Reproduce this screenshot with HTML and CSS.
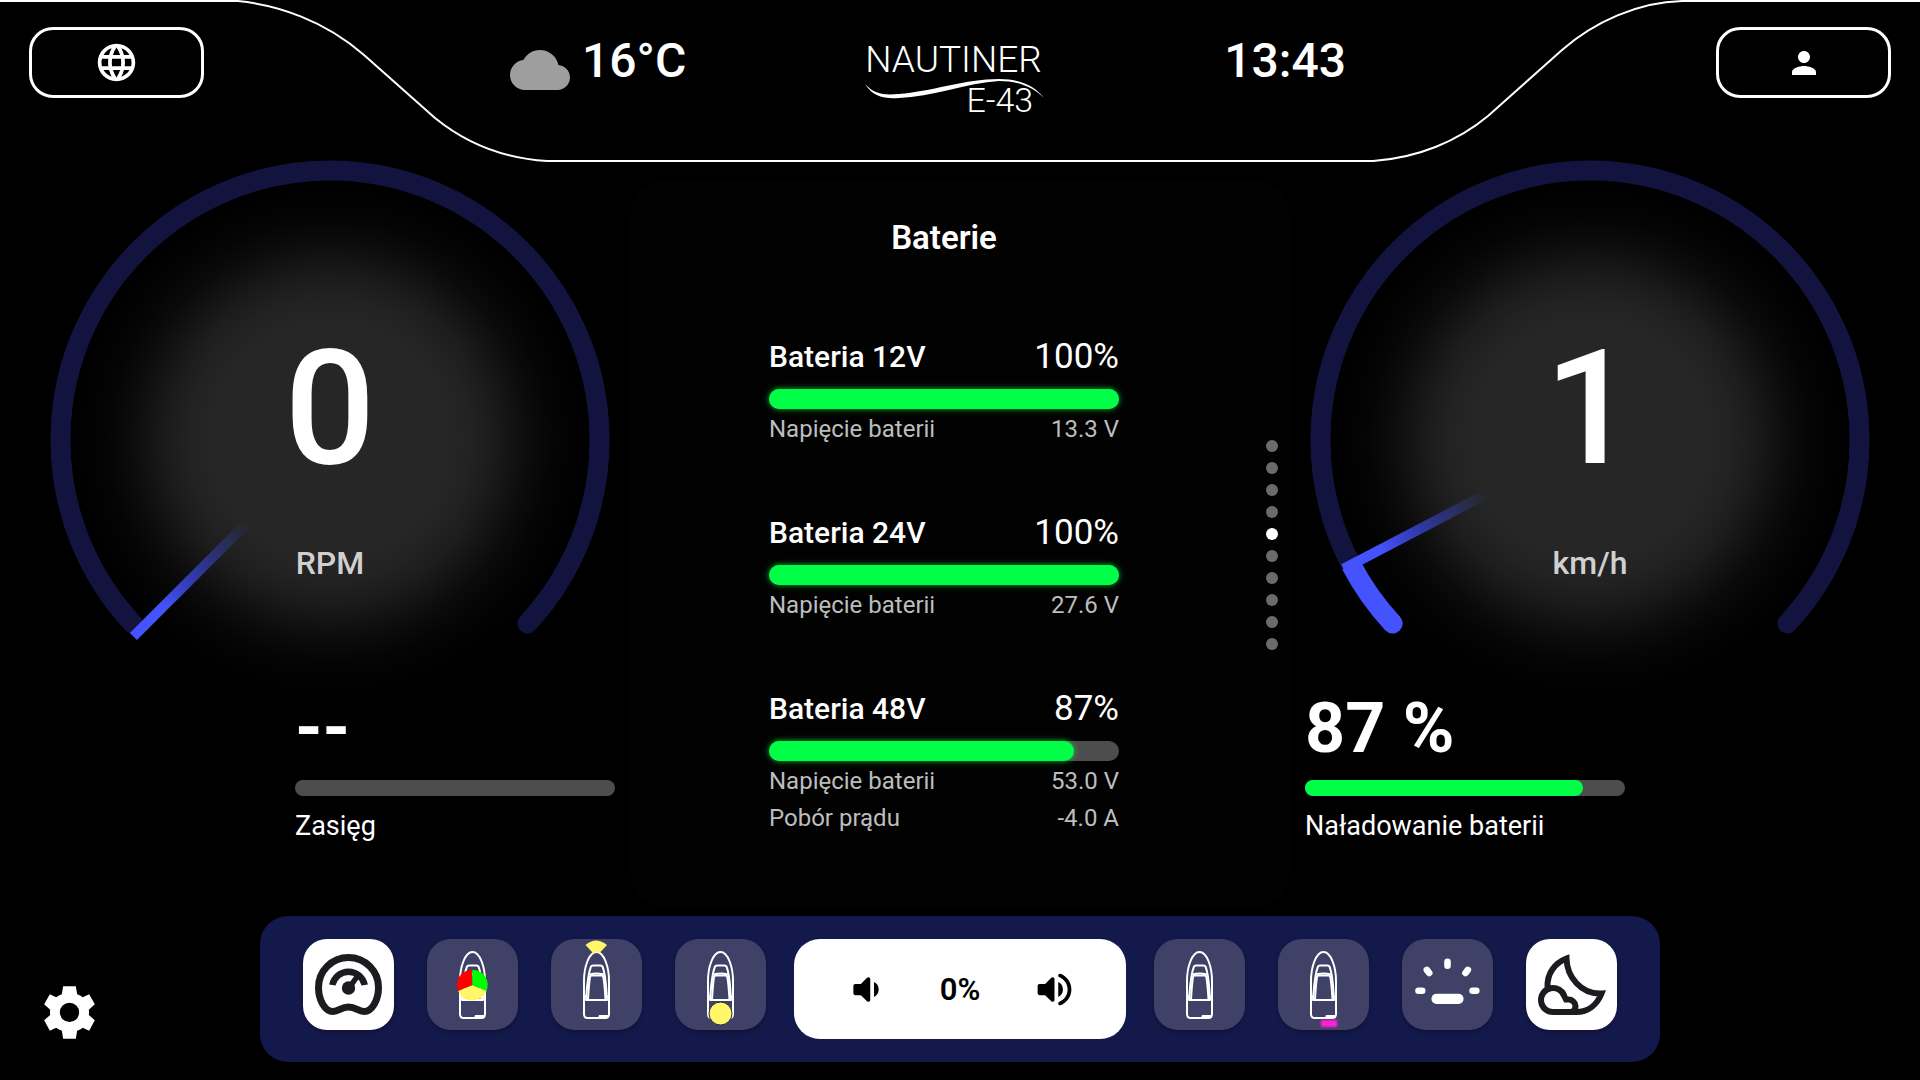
FILE: index.html
```html
<!DOCTYPE html>
<html lang="pl">
<head>
  <meta charset="UTF-8">
  <meta name="viewport" content="width=device-width, initial-scale=1.0">
  <title>Nautiner E-43</title>
  <link rel="stylesheet" href="styles.css">
</head>
<body>
  <!-- shared shapes -->
  <svg class="defs" aria-hidden="true">
    <symbol id="boat" viewBox="0 0 91 91">
      <g fill="none" stroke="#fff" stroke-width="2" stroke-linejoin="round">
        <path d="M45.500 13C38 13 33 28 33 42V75Q33 79 36.500 79H54.500Q58 79 58 75V42C58 28 53 13 45.500 13Z"/>
        <path d="M35 61C36 48 36.500 36 40 27.500Q40.500 26.500 42 26.500H49.500Q51 26.500 51.500 27.500C55 36 55 48 56 61Z"/>
        <path d="M37 60.500C37.500 52 38 44 39 38Q39.300 36.500 41 36.500H50.500Q52 36.500 52.300 38C53.500 44 54 52 54.500 60.500"/>
        <path d="M38.500 35.500Q45.500 33.500 53 35.500M33 57.500H36M58 57.500H55"/>
      </g>
      <path d="M48 76H57V79H47Z" fill="#fff"/>
    </symbol>
    <radialGradient id="glow" gradientUnits="userSpaceOnUse" cx="280" cy="280" r="260">
      <stop offset="0.45" stop-color="#262626"/>
      <stop offset="0.54" stop-color="#222"/>
      <stop offset="0.62" stop-color="#1c1c1c"/>
      <stop offset="0.69" stop-color="#141414"/>
      <stop offset="0.77" stop-color="#0b0b0b"/>
      <stop offset="0.85" stop-color="#050505"/>
      <stop offset="0.92" stop-color="#020202"/>
      <stop offset="1" stop-color="#000"/>
    </radialGradient>
    <linearGradient id="needle" x1="0" x2="1">
      <stop offset="0.25" stop-color="#4553ff"/>
      <stop offset="1" stop-color="#4553ff" stop-opacity="0"/>
    </linearGradient>
  </svg>

  <header class="topbar">
    <svg class="topbar-line" viewBox="0 0 1920 162" preserveAspectRatio="none" aria-hidden="true">
      <path d="M0 1H238C277 5 324 20 364 55L435 118C462 140 497 158 547 161H1373C1418 158 1458 141 1488 116L1562 50C1594 22 1638 2 1682 1H1920"/>
    </svg>

    <button class="outline-btn" aria-label="Język">
      <svg width="45" height="45" viewBox="0 0 24 24" fill="#fff"><path d="M11.990 2C6.470 2 2 6.480 2 12s4.470 10 9.990 10C17.520 22 22 17.520 22 12S17.520 2 11.990 2zm6.930 6h-2.950c-.320-1.250-.780-2.450-1.380-3.560 1.840.630 3.370 1.910 4.330 3.560zM12 4.040c.830 1.200 1.480 2.530 1.910 3.960h-3.820c.430-1.430 1.080-2.760 1.910-3.960zM4.260 14C4.100 13.360 4 12.690 4 12s.100-1.360.260-2h3.380c-.080.660-.140 1.320-.140 2s.060 1.340.140 2H4.260zm.820 2h2.950c.320 1.250.780 2.450 1.380 3.560-1.840-.630-3.370-1.900-4.330-3.560zm2.950-8H5.080c.960-1.660 2.490-2.930 4.330-3.560C8.810 5.550 8.350 6.750 8.030 8zM12 19.960c-.830-1.200-1.480-2.530-1.910-3.960h3.820c-.430 1.430-1.080 2.760-1.910 3.960zM14.340 14H9.660c-.090-.660-.160-1.320-.160-2s.070-1.350.160-2h4.680c.090.650.160 1.320.160 2s-.070 1.340-.160 2zm.250 5.560c.600-1.110 1.060-2.310 1.380-3.560h2.950c-.960 1.650-2.490 2.930-4.330 3.560zM16.360 14c.080-.660.140-1.320.140-2s-.060-1.340-.140-2h3.380c.160.640.260 1.310.260 2s-.100 1.360-.260 2h-3.380z"/></svg>
    </button>

    <div class="topbar-info">
      <div class="weather">
        <svg width="60" height="60" viewBox="0 0 24 24" fill="#9e9e9e"><path d="M19.350 10.040A7.490 7.490 0 0 0 12 4C9.110 4 6.600 5.640 5.350 8.040A5.994 5.994 0 0 0 0 14c0 3.310 2.690 6 6 6h13c2.760 0 5-2.240 5-5 0-2.640-2.050-4.780-4.650-4.960z"/></svg>
        <span class="top-value">16°C</span>
      </div>
      <div class="logo">
        <span class="logo-name">NAUTINER</span>
        <svg class="logo-wave" viewBox="0 0 180 20" fill="#fff"><path d="M0 4C10 15 20 15 34 14C64 12 100 -1 134 -1C156 -1 170 6 179 18C168 7 154 1 134 1C102 3 66 17 34 18C20 19 8 17 0 4Z"/></svg>
        <span class="logo-model">E-43</span>
      </div>
      <time class="top-value">13:43</time>
    </div>

    <button class="outline-btn" aria-label="Profil">
      <svg width="36" height="36" viewBox="0 0 24 24" fill="#fff"><path d="M12 12c2.210 0 4-1.790 4-4s-1.790-4-4-4-4 1.790-4 4 1.790 4 4 4zm0 2c-2.670 0-8 1.340-8 4v2h16v-2c0-2.660-5.330-4-8-4z"/></svg>
    </button>
  </header>

  <main class="dashboard">
    <section class="side side-left">
      <svg class="gauge" viewBox="0 0 560 528">
        <circle cx="280" cy="280" r="260" fill="url(#glow)"/>
        <path class="gauge-track" d="M82.600 463.500A269.500 269.500 0 1 1 477.400 463.500"/>
        <g transform="rotate(-45 280 280)">
          <rect x="2" y="275" width="162" height="10" fill="url(#needle)"/>
        </g>
        <text class="gauge-value" x="280" y="303">0</text>
        <text class="gauge-unit" x="280" y="414">RPM</text>
      </svg>
      <div class="stat">
        <div class="stat-value">--</div>
        <div class="bar bar-thin" role="progressbar" aria-label="Zasięg"></div>
        <div class="stat-label">Zasięg</div>
      </div>
    </section>

    <section class="panel">
      <div class="panel-content">
        <h1 class="panel-title">Baterie</h1>
        <div class="batteries">
          <div class="battery">
            <div class="battery-head">
              <h2>Bateria 12V</h2>
              <span class="battery-level">100%</span>
            </div>
            <div class="bar" role="progressbar" aria-label="Bateria 12V" aria-valuenow="100">
              <div class="bar-fill glow" style="width: 100%"></div>
            </div>
            <div class="battery-row"><span>Napięcie baterii</span><span>13.3 V</span></div>
          </div>
          <div class="battery">
            <div class="battery-head">
              <h2>Bateria 24V</h2>
              <span class="battery-level">100%</span>
            </div>
            <div class="bar" role="progressbar" aria-label="Bateria 24V" aria-valuenow="100">
              <div class="bar-fill glow" style="width: 100%"></div>
            </div>
            <div class="battery-row"><span>Napięcie baterii</span><span>27.6 V</span></div>
          </div>
          <div class="battery">
            <div class="battery-head">
              <h2>Bateria 48V</h2>
              <span class="battery-level">87%</span>
            </div>
            <div class="bar" role="progressbar" aria-label="Bateria 48V" aria-valuenow="87">
              <div class="bar-fill glow" style="width: 87%"></div>
            </div>
            <div class="battery-row"><span>Napięcie baterii</span><span>53.0 V</span></div>
            <div class="battery-row"><span>Pobór prądu</span><span>-4.0 A</span></div>
          </div>
        </div>
      </div>
      <nav class="dots">
        <button class="dot" aria-label="1"></button>
        <button class="dot" aria-label="2"></button>
        <button class="dot" aria-label="3"></button>
        <button class="dot" aria-label="4"></button>
        <button class="dot active" aria-label="5"></button>
        <button class="dot" aria-label="6"></button>
        <button class="dot" aria-label="7"></button>
        <button class="dot" aria-label="8"></button>
        <button class="dot" aria-label="9"></button>
        <button class="dot" aria-label="10"></button>
      </nav>
    </section>

    <section class="side side-right">
      <svg class="gauge" viewBox="0 0 560 528">
        <circle cx="280" cy="280" r="260" fill="url(#glow)"/>
        <path class="gauge-track" d="M82.600 463.500A269.500 269.500 0 1 1 477.400 463.500"/>
        <circle class="gauge-cap" cx="82.600" cy="463.500" r="10"/>
        <path class="gauge-progress" d="M82.600 463.500A269.500 269.500 0 0 1 41.200 404.900"/>
        <g transform="rotate(-27.600 280 280)">
          <rect x="2" y="275" width="162" height="10" fill="url(#needle)"/>
        </g>
        <text class="gauge-value" x="280" y="303">1</text>
        <text class="gauge-unit" x="280" y="414">km/h</text>
      </svg>
      <div class="stat">
        <div class="stat-value">87 %</div>
        <div class="bar bar-thin" role="progressbar" aria-label="Naładowanie baterii" aria-valuenow="87">
          <div class="bar-fill" style="width: 87%"></div>
        </div>
        <div class="stat-label">Naładowanie baterii</div>
      </div>
    </section>
  </main>

  <footer class="bottom">
    <button class="settings-btn" aria-label="Ustawienia">
      <svg width="51" height="53" viewBox="72 78 152 159" fill="#fff" fill-rule="evenodd"><path d="M129 79H167L171 103Q180 106 188 112L207 103L224 133L206 149Q207 157 206 165L224 181L207 212L188 203Q180 209 171 212L167 236H129L125 212Q116 209 108 203L89 212L72 181L90 165Q89 157 90 149L72 133L89 103L108 112Q116 106 125 103ZM148 128A29 29 0 1 0 148 186A29 29 0 1 0 148 128Z"/></svg>
    </button>

    <div class="dock">
      <div class="dock-group">
        <button class="tile light" aria-label="Pulpit">
          <svg viewBox="0 0 91 91" fill="none" stroke="#1c1b20">
            <path stroke-width="7" d="M45.500 68C38 68 36 72.500 30 72.500C22 72.500 15.500 61 15.500 48.500A30 30 0 0 1 75.500 48.500C75.500 61 69 72.500 61 72.500C55 72.500 53 68 45.500 68Z"/>
            <path stroke-width="6.500" d="M29.300 46A16.500 16.500 0 0 1 61.700 46"/>
            <path stroke-width="5.500" d="M46 49L56 35"/>
            <circle cx="45.500" cy="49" r="6.700" fill="#1c1b20" stroke="none"/>
          </svg>
        </button>
        <button class="tile" aria-label="Światła nawigacyjne">
          <svg viewBox="0 0 91 91">
            <use href="#boat"/>
            <path fill="#fff66a" d="M45.300 46L31.100 52A15.300 15.300 0 0 0 59.500 52Z"/>
            <path fill="#f00" d="M45.300 46V30.700A15.300 15.300 0 0 0 31.100 52Z"/>
            <path fill="#0f0" d="M45.300 46V30.700A15.300 15.300 0 0 1 59.500 52Z"/>
          </svg>
        </button>
        <button class="tile" aria-label="Światło dziobowe">
          <svg viewBox="0 0 91 91">
            <use href="#boat"/>
            <path fill="#fff66a" d="M42 14L34.500 6Q45 -3 56 6L48.500 14Q45.200 12.500 42 14Z"/>
          </svg>
        </button>
        <button class="tile" aria-label="Światło rufowe">
          <svg viewBox="0 0 91 91">
            <use href="#boat"/>
            <circle cx="45.500" cy="74.500" r="11.500" fill="#fff66a" stroke="#26263a"/>
          </svg>
        </button>
      </div>

      <div class="volume">
        <button class="volume-btn" aria-label="Ciszej">
          <svg width="45" height="45" viewBox="0 0 24 24"><path d="M5 10v4c0 .550.450 1 1 1h3l3.290 3.290c.630.630 1.710.180 1.710-.710V6.410c0-.890-1.080-1.340-1.710-.710L9 9H6c-.550 0-1 .450-1 1zm13.500 2A4.500 4.500 0 0 0 16 7.970v8.050c1.480-.730 2.500-2.250 2.500-4.020z"/></svg>
        </button>
        <span class="volume-value">0%</span>
        <button class="volume-btn" aria-label="Głośniej">
          <svg width="45" height="45" viewBox="0 0 24 24"><path d="M3 10v4c0 .550.450 1 1 1h3l3.290 3.290c.630.630 1.710.180 1.710-.710V6.410c0-.890-1.080-1.340-1.710-.710L7 9H4c-.550 0-1 .450-1 1zm13.500 2A4.500 4.500 0 0 0 14 7.970v8.050c1.480-.730 2.500-2.250 2.500-4.020zM14 4.450v.200c0 .380.250.710.600.850C17.180 6.530 19 9.060 19 12s-1.820 5.470-4.400 6.500c-.360.140-.600.470-.600.850v.200c0 .630.630 1.070 1.210.850C18.600 19.110 21 15.840 21 12s-2.400-7.110-5.790-8.400c-.580-.230-1.210.220-1.210.850z"/></svg>
        </button>
      </div>

      <div class="dock-group">
        <button class="tile" aria-label="Łódź">
          <svg viewBox="0 0 91 91"><use href="#boat"/></svg>
        </button>
        <button class="tile" aria-label="Światło podwodne">
          <svg viewBox="0 0 91 91">
            <use href="#boat"/>
            <rect class="underwater" x="43" y="81" width="16" height="7" fill="#ff22d8"/>
          </svg>
        </button>
        <button class="tile" aria-label="Oświetlenie">
          <svg viewBox="0 0 91 91" fill="#fff">
            <rect x="42.200" y="19.500" width="6.600" height="10.500" rx="3.300"/>
            <rect x="22.700" y="27.200" width="6.600" height="10.500" rx="3.300" transform="rotate(-38 26 32.400)"/>
            <rect x="61.400" y="27.200" width="6.600" height="10.500" rx="3.300" transform="rotate(38 64.700 32.400)"/>
            <rect x="13.200" y="48.400" width="10.300" height="6.600" rx="3.300"/>
            <rect x="67.300" y="48.400" width="10.300" height="6.600" rx="3.300"/>
            <rect x="29.400" y="54.700" width="32.200" height="10.200" rx="5.100"/>
          </svg>
        </button>
        <button class="tile light" aria-label="Tryb nocny">
          <svg viewBox="0 0 91 91" fill="none" stroke="#1c1b20" stroke-width="6">
            <path d="M21.500 48C21 34 29 24 40.500 19.500C41 38 55 55.500 75.500 54.500C71 66 62 73 50 73H41"/>
            <path d="M27.500 73A12 12 0 1 1 38.500 57.500L40 60.500H42A7 7 0 0 1 49.500 67Q49.500 71 46 73Z"/>
          </svg>
        </button>
      </div>
    </div>
  </footer>
</body>
</html>
```

FILE: styles.css
```css
* {
  box-sizing: border-box;
}

body {
  margin: 0;
  min-height: 100vh;
  display: flex;
  flex-direction: column;
  background: #000;
  color: #fff;
  font-family: Roboto, "Noto Sans", sans-serif;
}

button {
  padding: 0;
  border: none;
  background: none;
  color: inherit;
  font-family: inherit;
  cursor: pointer;
}

svg {
  display: block;
}

.defs {
  position: absolute;
  width: 0;
  height: 0;
}

/* Top bar */
.topbar {
  position: relative;
  display: flex;
  align-items: flex-start;
  height: 160px;
  padding: 27px 29px 0;
}

.topbar-line {
  position: absolute;
  top: 0;
  left: 0;
  width: 100%;
  height: 162px;
  pointer-events: none;
}

.topbar-line path {
  fill: none;
  stroke: #fff;
  stroke-width: 2;
  vector-effect: non-scaling-stroke;
}

.outline-btn {
  display: flex;
  align-items: center;
  justify-content: center;
  width: 175px;
  height: 71px;
  border: 3px solid #fff;
  border-radius: 24px;
}

.topbar-info {
  flex: 1;
  display: flex;
  justify-content: space-between;
  padding: 0 370px 0 306px;
}

.weather {
  display: flex;
  gap: 12px;
}

.weather svg {
  margin-top: 13px;
}

.top-value {
  font-size: 48px;
  line-height: 68px;
  font-weight: 500;
}

.logo {
  display: flex;
  flex-direction: column;
  padding-top: 13px;
  font-weight: 300;
}

.logo-name {
  font-size: 37px;
  line-height: 40px;
}

.logo-wave {
  width: 180px;
  height: 20px;
  overflow: visible;
}

.logo-model {
  align-self: flex-end;
  margin-top: -17px;
  padding-right: 12px;
  font-size: 34px;
  line-height: 34px;
}

/* Dashboard */
.dashboard {
  flex: 1;
  display: grid;
  grid-template-columns: 570fr 660fr 570fr;
  gap: 15px;
  padding: 0 45px;
}

.side {
  display: flex;
  flex-direction: column;
}

.side-left {
  align-items: flex-end;
}

.gauge {
  width: 100%;
  padding: 0 5px;
  overflow: visible;
}

.gauge-track {
  fill: none;
  stroke: #12143f;
  stroke-width: 20;
  stroke-linecap: round;
}

.gauge-progress {
  fill: none;
  stroke: #4553ff;
  stroke-width: 20;
}

.gauge-cap {
  fill: #4553ff;
}

.gauge-value {
  fill: #fff;
  font-size: 160px;
  font-weight: 500;
  text-anchor: middle;
}

.gauge-unit {
  fill: #d0d0d0;
  font-size: 32px;
  font-weight: 500;
  text-anchor: middle;
}

.stat {
  width: 320px;
}

.stat-value {
  font-size: 70px;
  line-height: 80px;
  font-weight: 700;
}

.stat-label {
  margin-top: 14px;
  font-size: 27px;
  line-height: 32px;
}

.bar {
  height: 20px;
  border-radius: 10px;
  background: #4d4d4d;
}

.bar-thin {
  height: 16px;
  margin-top: 12px;
}

.bar-fill {
  height: 100%;
  border-radius: 10px;
  background: #00ff47;
}

.glow {
  box-shadow: 0 0 6px rgba(0, 255, 71, 0.7);
}

/* Center panel */
.panel {
  display: grid;
  grid-template-columns: 1fr 32px;
  margin: 20px 0 8px;
  border-radius: 36px;
  background: #020202;
}

.panel-content {
  padding-top: 38px;
}

.panel-title {
  margin: 0;
  font-size: 33px;
  line-height: 40px;
  font-weight: 600;
  text-align: center;
}

.batteries {
  display: flex;
  flex-direction: column;
  gap: 65px;
  width: 350px;
  margin: 79px auto 0;
}

.battery-head {
  display: flex;
  align-items: center;
  justify-content: space-between;
  margin-bottom: 12px;
}

.battery-head h2 {
  margin: 0;
  font-size: 30px;
  line-height: 40px;
  font-weight: 500;
}

.battery-level {
  font-size: 35px;
  line-height: 40px;
  font-weight: 400;
}

.battery .bar {
  margin-bottom: 2px;
}

.battery-row {
  display: flex;
  justify-content: space-between;
  color: #bdbdbd;
  font-size: 24px;
  line-height: 37px;
}

.dots {
  display: flex;
  flex-direction: column;
  justify-content: center;
  align-items: center;
  gap: 10px;
  padding: 2px 4px 0 0;
}

.dot {
  width: 12px;
  height: 12px;
  border-radius: 50%;
  background: #6b6b6b;
}

.dot.active {
  background: #fff;
}

/* Bottom bar */
.bottom {
  display: grid;
  grid-template-columns: 260px 1fr 260px;
  align-items: end;
  padding-bottom: 18px;
}

.settings-btn {
  display: flex;
  align-items: center;
  justify-content: center;
  width: 64px;
  height: 64px;
  margin: 0 0 18px 37px;
}

.dock {
  display: flex;
  justify-content: center;
  gap: 28px;
  padding: 23px 20px;
  border-radius: 28px;
  background: #14194b;
}

.dock-group {
  display: flex;
  align-items: flex-start;
  gap: 33px;
}

.tile {
  width: 91px;
  height: 91px;
  border-radius: 24px;
  background: #3f4166;
  box-shadow: 0 2px 4px rgba(0, 0, 0, 0.3);
}

.tile.light {
  background: #fff;
}

.underwater {
  filter: blur(1px);
}

.volume {
  display: grid;
  grid-template-columns: repeat(3, 94px);
  justify-content: center;
  align-items: center;
  justify-items: center;
  width: 332px;
  height: 100px;
  border-radius: 26px;
  background: #fff;
  color: #000;
}

.volume-value {
  font-size: 31px;
  font-weight: 600;
}
```
